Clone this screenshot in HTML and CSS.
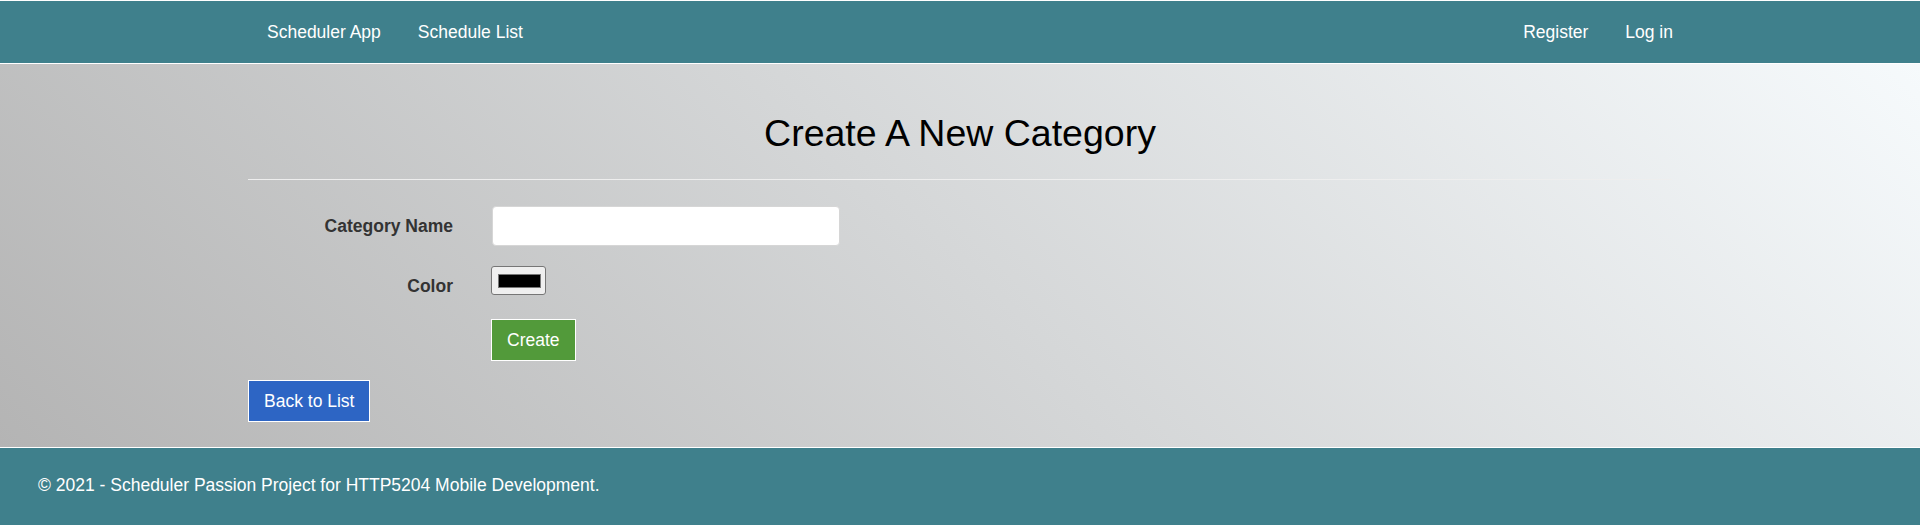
FILE: index.html
```html
<!DOCTYPE html>
<html lang="en">
<head>
<meta charset="utf-8">
<title>Create A New Category</title>
<link rel="stylesheet" href="styles.css">
</head>
<body>
<header class="navbar">
  <nav class="nav-inner">
    <ul class="nav-left">
      <li><a href="#">Scheduler App</a></li>
      <li><a href="#">Schedule List</a></li>
    </ul>
    <ul class="nav-right">
      <li><a href="#">Register</a></li>
      <li><a href="#">Log in</a></li>
    </ul>
  </nav>
</header>
<main class="main">
  <div class="container">
    <h1 class="title">Create A New Category</h1>
    <hr class="rule">
    <form class="form">
      <div class="form-row">
        <label class="form-label" for="name">Category Name</label>
        <input class="text-input" id="name" type="text">
      </div>
      <div class="form-row">
        <label class="form-label" for="color">Color</label>
        <input class="color-input" id="color" type="color" value="#000000">
      </div>
      <div class="form-row">
        <span class="form-label"></span>
        <div><button class="btn btn-create" type="button">Create</button></div>
      </div>
    </form>
    <div class="back-row"><a class="btn btn-back" href="#">Back to List</a></div>
  </div>
</main>
<footer class="footer">
  <p class="footer-text">© 2021 - Scheduler Passion Project for HTTP5204 Mobile Development.</p>
</footer>
</body>
</html>
```
FILE: styles.css
```css
html, body {
  margin: 0;
  padding: 0;
  height: 525px;
  overflow: hidden;
}
body {
  font-family: "Liberation Sans", Arial, sans-serif;
  font-size: 17.5px;
  line-height: 24px;
  color: #333;
  background: #3f808c;
  display: flex;
  flex-direction: column;
}
.navbar {
  background: #3f808c;
  border-top: 1px solid #ffffff;
  border-bottom: 1px solid #ffffff;
  height: 62px;
  flex: none;
}
.nav-inner {
  height: 62px;
  display: flex;
  justify-content: space-between;
  align-items: center;
  padding: 0 247px 0 267px;
}
.nav-left, .nav-right {
  list-style: none;
  margin: 0;
  padding: 0;
  display: flex;
  gap: 37px;
}
.nav-inner a {
  color: #ffffff;
  text-decoration: none;
  font-size: 17.5px;
  line-height: 24px;
}
.main {
  flex: none;
  height: 358px;
  padding-bottom: 25px;
  background: linear-gradient(45deg, #b4b4b4 0%, #f6fafc 100%);
}
.container {
  margin: 0 248px;
}
.title {
  margin: 49px 0 25px;
  font-size: 37.5px;
  line-height: 41px;
  font-weight: 400;
  color: #000;
  text-align: center;
}
.rule {
  margin: 0 0 26px;
  border: 0;
  border-top: 1px solid #eeeeee;
  height: 0;
}
.form {
  display: flex;
  flex-direction: column;
  gap: 20px;
}
.form-row {
  display: grid;
  grid-template-columns: 205px 1fr;
  column-gap: 39px;
  align-items: start;
  min-height: 33px;
}
.form-label {
  text-align: right;
  font-weight: 700;
  padding-top: 8px;
  color: #333;
}
.text-input {
  width: 348px;
  height: 40px;
  box-sizing: border-box;
  border: 1px solid #d6d6d6;
  border-radius: 4px;
  background: #fff;
  font: inherit;
  padding: 6px 12px;
  margin: 0;
}
.color-input {
  width: 55px;
  height: 29px;
  box-sizing: border-box;
  margin: 0 0 0 -1px;
  padding: 0;
  border: 1px solid #767676;
  border-radius: 3px;
  background: #efefef;
  cursor: pointer;
}
.color-input::-webkit-color-swatch-wrapper {
  padding: 7px 4px 6px 6px;
}
.color-input::-webkit-color-swatch {
  border: 1px solid #777;
  border-radius: 0;
}
.btn {
  display: inline-block;
  box-sizing: border-box;
  border: 1px solid #ffffff;
  padding: 8px 15px;
  font-family: inherit;
  font-size: 17.5px;
  line-height: 24px;
  color: #fff;
  text-decoration: none;
  cursor: pointer;
  margin: 0;
}
.btn-create {
  background: #529a3a;
  margin-left: -1px;
}
.back-row {
  margin-top: 19px;
}
.btn-back {
  background: #2d65c4;
}
.footer {
  flex: none;
  background: #3f808c;
  border-top: 1px solid #ffffff;
  height: 77px;
  box-sizing: content-box;
}
.footer-text {
  margin: 0;
  padding: 25px 0 0 38px;
  color: #fff;
  font-size: 17.5px;
  line-height: 24px;
}
```
